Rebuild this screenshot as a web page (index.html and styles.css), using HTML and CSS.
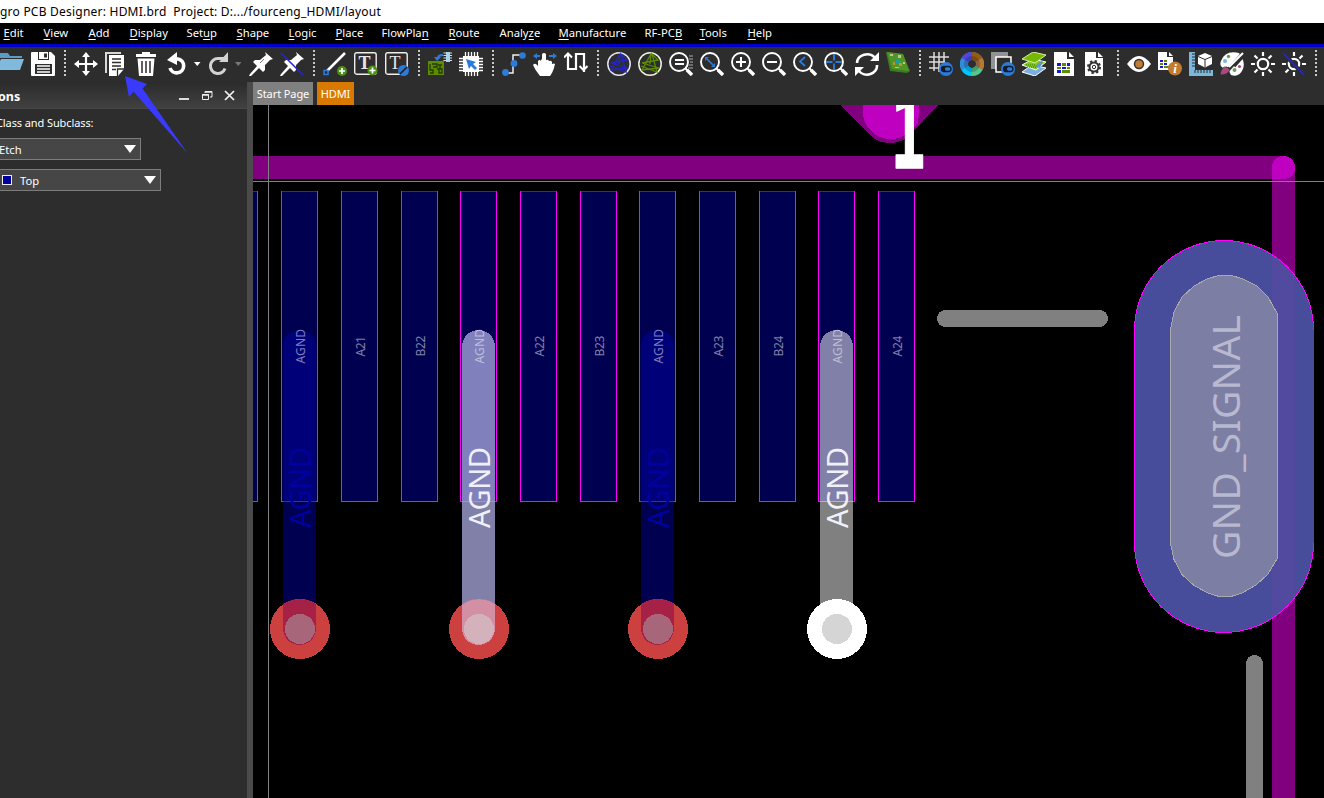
FILE: index.html
```
<!DOCTYPE html>
<html lang="en">
<head>
<meta charset="utf-8">
<title>PCB Designer</title>
<link rel="stylesheet" href="styles.css">
</head>
<body>
<div class="app">
<header class="titlebar">gro PCB Designer: HDMI.brd&nbsp; Project: D:.../fourceng_HDMI/layout</header>
<nav class="menubar">
<span><u>E</u>dit</span><span><u>V</u>iew</span><span><u>A</u>dd</span><span><u>D</u>isplay</span><span>Set<u>u</u>p</span><span><u>S</u>hape</span><span><u>L</u>ogic</span><span><u>P</u>lace</span><span>FlowPla<u>n</u></span><span><u>R</u>oute</span><span>Analy<u>z</u>e</span><span><u>M</u>anufacture</span><span>RF-PC<u>B</u></span><span><u>T</u>ools</span><span><u>H</u>elp</span>
</nav>
<div class="toolbar">
<svg class="icon" viewBox="0 0 24 24"><path d="M-6 1H8l2 3h12v2H-1l-5 13z" fill="#5b9cc4"/><path d="M1 7h23l-4 11H-5z" fill="#7fb9dc"/></svg>
<svg class="icon" viewBox="0 0 24 24"><path d="M1 0H20l4 4V23q0 1-1 1H1q-1 0-1-1V1Q0 0 1 0z" fill="#fff"/><path d="M7 0h11v8H7z" fill="#2d2d2d"/><path d="M8 0h9v7H8z" fill="#fff"/><path d="M13 1.500h3v4h-3zM4 12h17v10H4z" fill="#2d2d2d"/><path d="M6 14h13M6 17h13M6 20h13" stroke="#fff" stroke-width="1.500"/></svg>
<i class="sep"></i>
<svg class="icon" viewBox="0 0 24 24"><path d="M12 3v18M3 12h18" stroke="#fff" stroke-width="2.200"/><path d="M12 0l4 5H8zM12 24l4-5H8zM0 12l5-4v8zM24 12l-5-4v8z" fill="#fff"/></svg>
<svg class="icon" viewBox="0 0 24 24"><path d="M0 0h16v2H2v19H0z" fill="#d8d8d8"/><path d="M4 3h15v14l-6 7H4z" fill="#fff"/><path d="M7 7h9M7 10.500h9M7 14h9M7 17.500h4" stroke="#2d2d2d" stroke-width="1.500"/><path d="M12.500 24v-7H19.500" fill="none" stroke="#2d2d2d" stroke-width="1.300"/></svg>
<svg class="icon" viewBox="0 0 24 24"><path d="M0 2h6V0h8v2h6v3H0zM1.500 6.500h17L17 24H3z" fill="#fff"/><path d="M6 9v12M10 9v12M14 9v12" stroke="#2d2d2d" stroke-width="1.500"/></svg>
<span class="split"><svg class="icon" viewBox="0 0 24 24"><path d="M6 7H11a7 7 0 1 1-8 9" fill="none" stroke="#fff" stroke-width="3.600"/><path d="M0 8L10 0v13z" fill="#fff"/></svg><svg class="drop" viewBox="0 0 10 24"><path d="M3 10h6.500l-3.250 4z" fill="#fff"/></svg></span>
<span class="split"><svg class="icon" viewBox="0 0 24 24"><path d="M16 6.500H10a7.500 7.500 0 1 0 7 10" fill="none" stroke="#d2d2d2" stroke-width="3"/><path d="M20 0v10H11z" fill="#d2d2d2"/></svg><svg class="drop" viewBox="0 0 10 24"><path d="M3 10h6.500l-3.250 4z" fill="#777"/></svg></span>
<svg class="icon" viewBox="0 0 24 24"><path id="pin" d="M16 0l8 7-3 1-5 5v5l-2 2-4-4-8 8-2 0 1-2 7-8-4-4 2-2h5l6-5z" fill="#fff"/><path d="M11 11l4-4" stroke="#777" stroke-width="1"/></svg>
<svg class="icon" viewBox="0 0 24 24"><use href="#pin"/><path d="M1 1l22 22" stroke="#2424d8" stroke-width="1.600"/></svg>
<i class="sep"></i>
<svg class="icon" viewBox="0 0 24 24"><path d="M3 20L22 1" stroke="#fff" stroke-width="2.500"/><path d="M1 18.500h4v4H1z" fill="#2d2d2d" stroke="#2c7bd9" stroke-width="1.600"/><circle cx="19" cy="19" r="5" fill="#4c8d16"/><path d="M19 16v6M16 19h6" stroke="#fff" stroke-width="1.700"/></svg>
<svg class="icon" viewBox="0 0 24 24"><rect x=".7" y=".7" width="21.500" height="21.500" rx="2" fill="none" stroke="#eee" stroke-width="1.400"/><text x="10.500" y="17" class="glyph">T</text><circle cx="18.500" cy="18.500" r="5" fill="#4c8d16"/><path d="M18.500 15.500v6M15.500 18.500h6" stroke="#fff" stroke-width="1.700"/></svg>
<svg class="icon" viewBox="0 0 24 24"><rect x=".7" y=".7" width="21.500" height="21.500" rx="2" fill="none" stroke="#eee" stroke-width="1.400"/><text x="10" y="16.500" class="glyph thin">T</text><circle cx="18.500" cy="18.500" r="5.500" fill="#2c7bd9"/><path d="M15 22l7-7" stroke="#222" stroke-width="1.700"/></svg>
<i class="sep"></i>
<svg class="icon" viewBox="0 0 24 24"><path d="M0 9h16v14H0z" fill="#5c8c00"/><path d="M2 12v6h3v3H2M4 12h5v3H5M10 13h4M12 13v4M9 17h5v4h-3v-4" fill="none" stroke="#263800" stroke-width="1.300"/><path d="M15 3c-4 0-5 1-5 3" fill="none" stroke="#2c7bd9" stroke-width="2.200"/><path d="M6 5h7l-4 4z" fill="#2c7bd9"/><path d="M18 0h4v10h-4z" fill="#a4d4ee"/><path d="M15.500 1h3M15.500 3.500h3M15.500 6h3M15.500 8.500h3M22 1h2M22 3.500h2M22 6h2M22 8.500h2" stroke="#ddd"/></svg>
<svg class="icon" viewBox="0 0 24 24"><path d="M4 4h16v16H4z" fill="#fff"/><path d="M6.500 0v24M9.500 0v24M12.500 0v24M15.500 0v24M18.500 0v24M0 6.500h24M0 9.500h24M0 12.500h24M0 15.500h24M0 18.500h24" stroke="#fff" stroke-width="1.300"/><path d="M7 7l10 3-3 2 4 4-2 2-4-4-2 3z" fill="#2c7bd9"/></svg>
<i class="sep"></i>
<svg class="icon" viewBox="0 0 24 24"><path d="M3 21h8V3h10" fill="none" stroke="#eee" stroke-width="1.500"/><g fill="#2c7bd9"><circle cx="3.500" cy="20.500" r="3.400"/><circle cx="12" cy="11.500" r="3.400"/><circle cx="20.500" cy="3.500" r="3.300"/></g></svg>
<svg class="icon" viewBox="0 0 24 24"><path d="M0 13q2-3 5 1V9q1.500-2 3 0V8l1-1V2q2-2 4 0v6q2-1 3 1 2-1 3 1v2q2-1 3 0-1 5-3 9l-2 3H7q-5-6-7-11z" fill="#fff"/><path d="M0 4l4-3v2h3v2H4v2zM24 4l-4-3v2h-4v2h4v2z" fill="#2c7bd9"/></svg>
<svg class="icon" viewBox="0 0 24 24"><path d="M4 2v15h8V2h8v18" fill="none" stroke="#fff" stroke-width="2.200"/><path d="M0 5.500l4-4 4 4M15.500 14l4 4 4-4" fill="none" stroke="#fff" stroke-width="2"/></svg>
<i class="sep"></i>
<svg class="icon" viewBox="0 0 24 24"><circle cx="12" cy="12" r="11.200" fill="none" stroke="#e4e4f8" stroke-width="1.500"/><path d="M13 2L4 18l17-2L4 11l16-3-6-6 5 18L3 14M13 2l-1 10" fill="none" stroke="#2424cf" stroke-width="1.300"/></svg>
<svg class="icon" viewBox="0 0 24 24"><circle cx="12" cy="12" r="11.200" fill="none" stroke="#f1f3e4" stroke-width="1.500"/><path d="M13 2L4 18l17-2L4 11l16-3-6-6 5 18L3 14M13 2l-1 10" fill="none" stroke="#5c8c00" stroke-width="1.300"/></svg>
<svg class="icon" viewBox="0 0 24 24"><g id="lens" fill="none" stroke="#fff"><circle cx="10" cy="10" r="9" stroke-width="1.900"/><path d="M16 16l3 3" stroke-width="2"/><path d="M18 18l5 5" stroke-width="3.400"/></g><path d="M6 8h9M6 12h9" stroke="#fff" stroke-width="2"/><path d="M20 4h4M20 7h4M21 10h3M20 13h4M19 16h5" stroke="#aaa"/></svg>
<svg class="icon" viewBox="0 0 24 24"><use href="#lens"/><path d="M7 7l6 6" stroke="#2c7bd9" stroke-width="1.700"/><path d="M5 9V5h4zM15 11v4h-4z" fill="#2c7bd9"/></svg>
<svg class="icon" viewBox="0 0 24 24"><use href="#lens"/><path d="M10 5v10M5 10h10" stroke="#fff" stroke-width="2"/></svg>
<svg class="icon" viewBox="0 0 24 24"><use href="#lens"/><path d="M5 10h10" stroke="#fff" stroke-width="2"/></svg>
<svg class="icon" viewBox="0 0 24 24"><use href="#lens"/><path d="M12 5L7 9.500l5 4.500" fill="none" stroke="#2c7bd9" stroke-width="1.800"/></svg>
<svg class="icon" viewBox="0 0 24 24"><use href="#lens"/><path d="M10 2v16M2 10h16" stroke="#2c7bd9" stroke-width="1.900" stroke-dasharray="6.500 3"/></svg>
<svg class="icon" viewBox="0 0 24 24"><path d="M2 11A10 9 0 0 1 20 6M22 13A10 9 0 0 1 4 19" fill="none" stroke="#fff" stroke-width="2.600"/><path d="M24 0v9h-9zM0 24v-9h9z" fill="#fff"/></svg>
<svg class="icon" viewBox="0 0 24 24"><path d="M0 0l17 2 7 17-3 2L4 19z" fill="#3e7b20"/><path d="M1 0l16 2 6 17-17-2z" fill="#4f9528"/><path d="M4 2h3v2H4zM12 3h3v3h-3zM17 10h2v2h-2zM9 15h4v1H9z" fill="#c4c58b"/><path d="M10 8h4v3h-4z" fill="#159eac"/><path d="M7 10h2v3H7zM13 11h3v3h-3z" fill="#d18d27"/></svg>
<i class="sep"></i>
<svg class="icon" viewBox="0 0 24 24"><path d="M5 0v19M10 0v20M15 0v12M0 5h20M0 10h16M0 16h10" stroke="#ddd" stroke-width="1.500"/><g id="toggle"><circle cx="17" cy="17" r="7" fill="#2c7bd9"/><rect x="12.500" y="14.500" width="9.500" height="5" rx="2.500" fill="none" stroke="#111b29" stroke-width="1.300"/><path d="M13 15h4q-2 2 0 4h-4z" fill="#111b29"/></g></svg>
<svg class="icon" viewBox="0 0 24 24"><g fill="none" stroke-width="8"><circle cx="12" cy="12" r="8" stroke="#2998d3"/><path d="M12 4a8 8 0 0 1 7 4" stroke="#995a12"/><path d="M19 8a8 8 0 0 1 0 8" stroke="#ba7933"/><path d="M19 16a8 8 0 0 1-7 4" stroke="#53c985"/><path d="M12 20a8 8 0 0 1-7-4" stroke="#00c6fa"/><path d="M5 16a8 8 0 0 1 0-8" stroke="#318bd8"/><path d="M5 8a8 8 0 0 1 7-4" stroke="#5245df"/></g><circle cx="12" cy="12" r="6" fill="none" stroke="#152045" stroke-opacity=".25" stroke-width="4"/><circle cx="12" cy="12" r="3" fill="#2d2d2d"/></svg>
<svg class="icon" viewBox="0 0 24 24"><path d="M0 0h17v17H0z" fill="#909295"/><path d="M5 5h15v15H5z" fill="#2d2d2d" stroke="#fff" stroke-width="1.500"/><use href="#toggle"/></svg>
<svg class="icon" viewBox="0 0 24 24"><path d="M0 20l10-7 14 3-11 8z" fill="#78afe0" stroke="#fff"/><path d="M0 13l11-6 13 3-10 8z" fill="#83c719" stroke="#fff"/><path d="M13 14l8-6-3 8z" fill="#5b95d9"/><path d="M0 7L11 0l13 3-11 8z" fill="#76b900" stroke="#d5efac"/><path d="M4 13h10M5 15h9" stroke="#317500" stroke-dasharray="1 1"/></svg>
<svg class="icon" viewBox="0 0 24 24"><path d="M1 0h13v7h7v17H1zM16 0l5 5h-5z" fill="#fff"/><path d="M4 11h4v3H4zM14 11h3v3h-3zM9 15h4v2H9zM4 18h4v3H4z" fill="#1515df"/><path d="M9 11h4v3H9zM4 15h4v2H4zM14 15h3v2h-3zM9 18h8v3H9z" fill="#5c8c00"/></svg>
<svg class="icon" viewBox="0 0 24 24"><path d="M1 0h11v6h7v18H1zM14 0l5 5h-5z" fill="#fff"/><circle cx="10" cy="15" r="4.500" fill="#fff" stroke="#333" stroke-width="2"/><circle cx="10" cy="15" r="6" fill="none" stroke="#333" stroke-width="2" stroke-dasharray="2.350"/><circle cx="10" cy="15" r="1.700" fill="#fff" stroke="#333"/></svg>
<i class="sep"></i>
<svg class="icon" viewBox="0 0 24 24"><path d="M0 12Q12-4 24 12Q12 28 0 12z" fill="#fff"/><circle cx="12" cy="12" r="4.500" fill="#c17b32" stroke="#333" stroke-width="1.500"/></svg>
<svg class="icon" viewBox="0 0 24 24"><path d="M0 0h9v5h6v13H0zM11 0l4 4h-4z" fill="#fff"/><path d="M2 8h3v2H2zM6 11h3v2H6zM2 14h3v2H2z" fill="#1515df"/><path d="M6 8h3v2H6zM2 11h3v2H2zM6 14h5v2H6z" fill="#5c8c00"/><circle cx="17" cy="16.500" r="7" fill="#c17b32"/><text x="17" y="21" class="info">i</text></svg>
<svg class="icon" viewBox="0 0 24 24"><path d="M0 0h6v18h18v6H0z" fill="#7cb7dc"/><path d="M3 2h3M3 5h3M3 8h3M3 11h3M3 14h3M6 18v3M9 18v3M12 18v3M15 18v3M18 18v3M21 18v3" stroke="#2d2d2d"/><path d="M16 1l7 3v8l-7 3.500L9 12V4z" fill="#fff"/><path d="M9 4.500l7 3 7-3M16 7.500V15" fill="none" stroke="#2d2d2d"/></svg>
<svg class="icon" viewBox="0 0 24 24"><path d="M19 1Q5-2 1 9q-2 5 2 7l5 1 3 6q8 3 12-6 2-6-1-11z" fill="#fff"/><path d="M24 0L9 17M14 14l9-10" stroke="#2d2d2d" stroke-width="3.500" fill="none"/><path d="M23 1L9 15" stroke="#fff" stroke-width="2.200"/><circle cx="5" cy="9" r="2" fill="#70b8d8"/><circle cx="8.500" cy="4.500" r="1.700" fill="#68a044"/><circle cx="14.500" cy="18" r="2" fill="#7a995a"/><circle cx="19.500" cy="14.500" r="1.600" fill="#a94b7f"/><path d="M0 23q1-9 7-8l3 3q-2 5-10 5z" fill="#a94b7f" stroke="#2d2d2d" stroke-width=".8"/></svg>
<svg class="icon" viewBox="0 0 24 24"><g id="sun" stroke="#fff" stroke-width="2.200" fill="none"><circle cx="12" cy="12" r="5.200"/><path d="M12 0v4M12 20v4M0 12h4M20 12h4M3.500 3.500l3 3M17.500 17.500l3 3M3.500 20.500l3-3M17.500 6.500l3-3"/></g></svg>
<svg class="icon" viewBox="0 0 24 24"><use href="#sun"/><path d="M0 0l22 23" stroke="#2d2d2d" stroke-width="4"/><path d="M1 1l21 22" stroke="#2424d8" stroke-width="1.600"/></svg>
<i class="sep"></i>
</div>
<main class="workspace">
<aside class="panel">
<div class="panel-head"><b>ons</b>
<svg class="panel-tools" viewBox="0 0 60 24"><path d="M1 16h10" stroke="#ddd" stroke-width="2"/><path d="M27 10V8.500h7V14h-2M24.500 11.500h6v5h-6z" fill="none" stroke="#eee"/><path d="M27 9h7M24 12h7" stroke="#eee" stroke-width="1.500"/><path d="M47 8l9 9M56 8l-9 9" stroke="#f4f4f4" stroke-width="1.700"/></svg></div>
<div class="panel-body">
<p class="label">Class and Subclass:</p>
<div class="select etch"><span>Etch</span><i></i></div>
<div class="select top"><em></em><span>Top</span><i></i></div>
</div>
</aside>
<section class="editor">
<div class="tabs"><span class="tab">Start Page</span><span class="tab active">HDMI</span></div>
<svg class="board" viewBox="253 105 1071 693">
<defs>
<g id="pad"><path d="M0 191h37v310H0z" fill="#000050"/><path d="M.5 191v311M36.500 191v311M0 501.500h37" stroke="#f0f"/><path d="M1 191.500h35" stroke="#6a00e0"/></g>
<path id="trace" d="M-16.500 628.500V346.500a16.500 16.500 0 0 1 33 0V628.500a16.500 16.500 0 0 1-33 0z"/>
<clipPath id="ring"><circle cx="0" cy="629" r="30"/></clipPath>
<path id="slot" d="M1134.500 330a89.500 89.500 0 0 1 179 0v213a89.500 89.500 0 0 1-179 0z"/>
<clipPath id="slot-clip"><use href="#slot"/></clipPath>
</defs>
<g class="bars"><path d="M240 167.500H1283.500"/><path d="M1283.500 167.500V820"/></g>
<g>
<use href="#pad" x="221"/><use href="#pad" x="281"/><use href="#pad" x="341"/><use href="#pad" x="400.500"/><use href="#pad" x="460"/><use href="#pad" x="520"/><use href="#pad" x="579.500"/><use href="#pad" x="639"/><use href="#pad" x="699"/><use href="#pad" x="758.500"/><use href="#pad" x="818"/><use href="#pad" x="878"/>
</g>
<g class="blue-trace"><use href="#trace" x="299.500"/><use href="#trace" x="478.500"/><use href="#trace" x="657.500"/></g>
<g class="white-trace"><use href="#trace" x="478.500"/><use href="#trace" x="836.500"/></g>
<g transform="translate(300 0)"><circle cy="629" r="30" fill="#cc4040"/><g clip-path="url(#ring)"><use href="#trace" x="-.5" fill="#a62146"/></g><circle cy="629" r="15" fill="#a7667a"/></g>
<g transform="translate(479 0)"><circle cy="629" r="30" fill="#cc4040"/><g clip-path="url(#ring)"><use href="#trace" x="-.5" fill="#d38fa4"/></g><circle cy="629" r="15" fill="#d3b2bc"/></g>
<g transform="translate(658 0)"><circle cy="629" r="30" fill="#cc4040"/><g clip-path="url(#ring)"><use href="#trace" x="-.5" fill="#a62146"/></g><circle cy="629" r="15" fill="#a7667a"/></g>
<circle cx="837" cy="629" r="30" fill="#fff"/><circle cx="837" cy="629" r="15" fill="#d5d5d5"/>
<g class="pin">
<text transform="translate(305 363.500) rotate(-90)" textLength="34.500">AGND</text><text transform="translate(365 356.500) rotate(-90)" textLength="20.500">A21</text><text transform="translate(425 356.500) rotate(-90)" textLength="21">B22</text><text transform="translate(484 363.500) rotate(-90)" textLength="34.500">AGND</text><text transform="translate(544 356.500) rotate(-90)" textLength="21">A22</text><text transform="translate(604 356.500) rotate(-90)" textLength="21">B23</text><text transform="translate(663 363.500) rotate(-90)" textLength="34.500">AGND</text><text transform="translate(723 356.500) rotate(-90)" textLength="21">A23</text><text transform="translate(783 356.500) rotate(-90)" textLength="21">B24</text><text transform="translate(842 363.500) rotate(-90)" textLength="34.500">AGND</text><text transform="translate(902 356.500) rotate(-90)" textLength="21">A24</text>
</g>
<g class="net">
<text class="dim" transform="translate(311 528) rotate(-90)" textLength="81">AGND</text><text transform="translate(490 528) rotate(-90)" textLength="81">AGND</text><text class="dim" transform="translate(669 528) rotate(-90)" textLength="81">AGND</text><text transform="translate(848 528) rotate(-90)" textLength="81">AGND</text>
</g>
<path d="M840 105l32 32q8 6 18 6t18-6l30-32z" fill="#800080"/>
<path d="M863 105v7a27.500 27.500 0 0 0 46 20l9-9 1-10v-8z" fill="#c000c0"/>
<text class="refdes" transform="translate(908 167.500) scale(.93 1.630)">1</text>
<use href="#slot" fill="#474c9b"/>
<path d="M1272 230h23v413h-23z" fill="#524a9e" clip-path="url(#slot-clip)"/>
<path d="M1313.500 330a89.500 89.500 0 0 0-179 0v213a89.500 89.500 0 0 0 179 0" fill="none" stroke="#f0f"/>
<path d="M1219 275.500h12l11 3 15 7.500 11 11 9.500 17v244l-9.500 16-12 11-14 8-11 3.500h-12l-11-3.500-14-7.500-12-11-8-15-3.500-16V330l3.500-18 8-15 12-11 14-7.500z" fill="#7c7ea4" stroke="#aaa"/>
<text class="signal" transform="translate(1239.500 559) rotate(-90)" textLength="244">GND_SIGNAL</text>
<rect x="937" y="310" width="171" height="17" rx="8.500" fill="#808080"/><rect x="1246" y="655" width="17" height="170" rx="8.500" fill="#808080"/>
<path d="M253 181.500H1324M268.500 105V798" stroke="#808080"/>
</svg>
</section>
</main>
<svg class="pointer" viewBox="0 0 70 84"><path d="M3 2l22 8-4.500 4.500L66 80 11.500 17.500 7 23z" fill="#3a3aff"/></svg>
</div>
</body>
</html>
```
FILE: styles.css
```
* { box-sizing: border-box; }
body { margin: 0; background: #2d2d2d; color: #fff; font: 12px "Noto Sans", sans-serif; overflow: hidden; }
.app { position: relative; width: 1324px; height: 798px; display: flex; flex-direction: column; overflow: hidden; }
.titlebar { height: 23px; flex: none; background: #fff; color: #000; line-height: 23px; white-space: pre; font-size: 12px; letter-spacing: .225px; }
.menubar { height: 24px; flex: none; background: #000; border-bottom: 3px solid #0000cd; display: grid; grid-template-columns: 40px 45px 41px 57px 50px 52px 47px 46px 67px 51px 59px 86px 55px 48px 40px; padding-left: 3.500px; line-height: 19px; font-size: 11.250px; white-space: nowrap; }
.menubar u { text-underline-offset: 2px; text-decoration-thickness: 1px; }
.toolbar { height: 35px; flex: none; display: flex; gap: 7px; padding-top: 5px; background: #2d2d2d; }
.icon { width: 24px; height: 24px; flex: none; display: block; overflow: hidden; }
.split { display: flex; flex: none; }
.drop { width: 10px; height: 24px; overflow: visible; }
.sep { width: 5px; height: 27px; flex: none; margin-top: -2px; background: repeating-linear-gradient(#c8c8c8 0 2px, transparent 2px 4px) 2px 0 / 2px 27px no-repeat; }
.glyph { font: bold 18px "Liberation Serif", serif; fill: #e8e8e8; text-anchor: middle; }
.thin { font-weight: normal; }
.info { font: italic bold 13px "Liberation Serif", serif; fill: #fff; text-anchor: middle; }
.workspace { flex: 1; min-height: 0; display: flex; }
.panel { width: 253px; flex: none; border-right: 6px solid #4a4a4a; }
.panel-head { height: 27px; display: flex; justify-content: space-between; align-items: center; background: linear-gradient(#2b2b2b, #414141); border-bottom: 1px solid #474747; font-size: 12.500px; }
.panel-head b { margin-left: -2px; padding-top: 2px; }
.panel-tools { width: 60px; height: 24px; margin-right: 9.500px; }
.panel-body { display: flex; flex-direction: column; align-items: flex-start; }
.label { margin: 5px 0 7px -4px; height: 17px; line-height: 18px; font-size: 11px; letter-spacing: -.1px; }
.select { height: 22px; display: flex; align-items: center; background: #464646; border: 1px solid #7d7d7d; border-left: 0; font-size: 11.200px; }
.select i { margin-left: auto; border: 6px solid transparent; border-top: 8px solid #fff; border-bottom: 0; }
.etch { width: 141px; padding-right: 4px; margin-bottom: 9px; }
.etch span { margin-left: -1px; }
.top { width: 161px; padding-right: 4px; }
.top em { width: 10px; height: 10px; margin: 0 8px 0 2px; background: #0000a0; border: 1px solid #eee; }
.editor { flex: 1; min-width: 0; display: flex; flex-direction: column; }
.tabs { height: 23px; display: flex; gap: 4px; }
.tab { width: 60px; background: #808080; text-align: center; line-height: 23px; font-size: 11px; letter-spacing: -.1px; white-space: nowrap; }
.active { width: 37px; background: #d87900; }
.board { display: block; width: 1071px; height: 693px; background: #000; shape-rendering: crispEdges; font-family: "Noto Sans", sans-serif; }
.bars { fill: none; stroke: rgba(255, 0, 255, .5); stroke-width: 23px; stroke-linecap: round; }
.blue-trace { fill: rgba(0, 0, 160, .5); }
.white-trace { fill: rgba(255, 255, 255, .5); }
.pin { font-size: 12px; fill: rgba(255, 255, 255, .5); }
.net { font-size: 29px; fill: #f0f0f8; }
.dim { fill: #0000a0; }
.signal { font-size: 39px; fill: #b8b8cf; }
.refdes { font: bold 62px "DejaVu Sans Mono", monospace; fill: #fff; text-anchor: middle; stroke: #fff; stroke-width: 1px; stroke-linejoin: round; }
.pointer { position: absolute; left: 122px; top: 74px; width: 70px; height: 84px; }
```
